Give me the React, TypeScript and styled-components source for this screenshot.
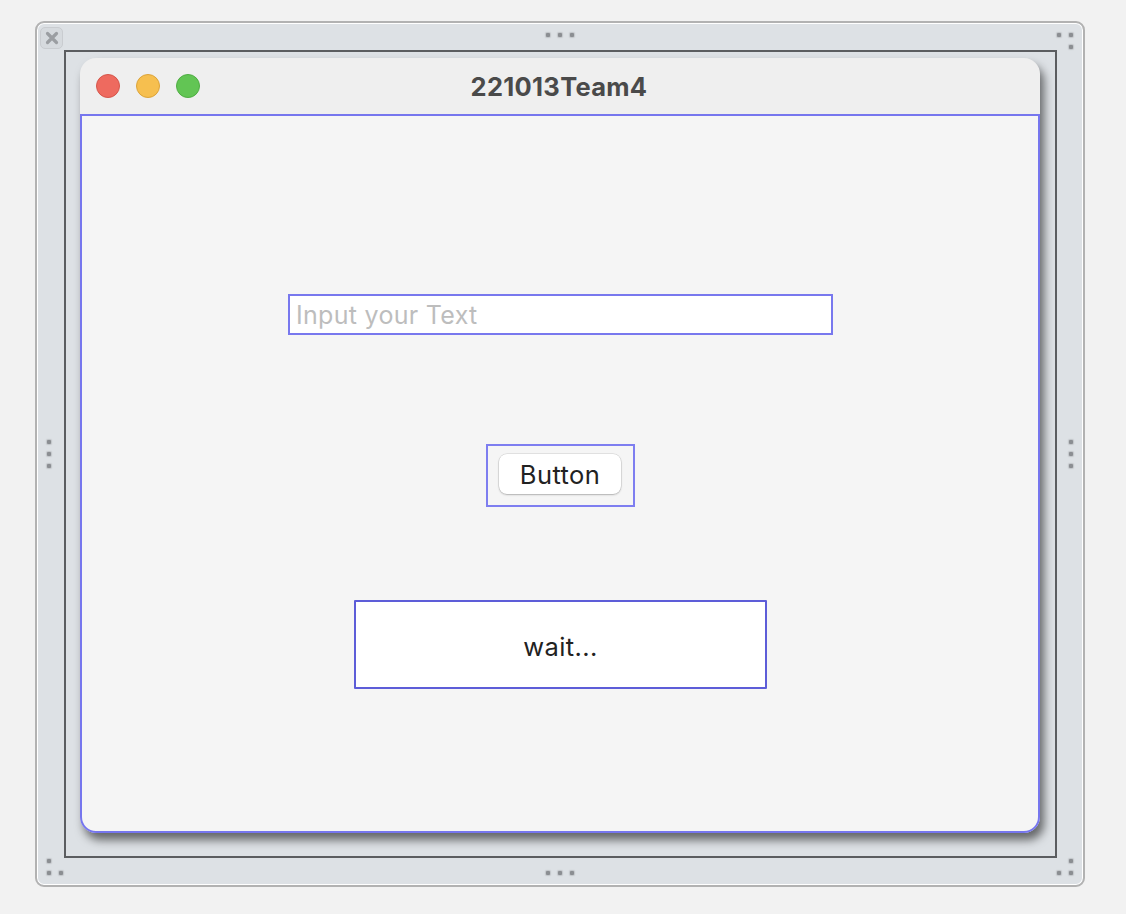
import React from 'react';
import styled, { createGlobalStyle } from 'styled-components';

const GlobalStyle = createGlobalStyle`
    html, body {
        margin: 0;
        padding: 0;
        background: #f2f2f2;
        font-family: Inter, "Liberation Sans", sans-serif;
    }
`;

const Page = styled.div`
    width: 1126px;
    height: 914px;
    padding: 21px 0 0 35px;
    box-sizing: border-box;
`;

const Frame = styled.div`
    position: relative;
    width: 1050px;
    height: 866px;
    box-sizing: border-box;
    border: 2px solid #b2b2b2;
    border-radius: 9px;
    background: #dde1e5;
    box-shadow: inset 0 0 0 1px #ffffff;
    padding: 27px;
`;

const CloseBox = styled.div`
    position: absolute;
    left: 3px;
    top: 4px;
    width: 23px;
    height: 22px;
    box-sizing: border-box;
    border: 1px solid #c9ccd0;
    border-radius: 5px;
    background: #d6dade;
    display: flex;
    align-items: center;
    justify-content: center;
`;

const Dot = styled.span<{ $x: number; $y: number }>`
    position: absolute;
    left: ${p => p.$x - 2}px;
    top: ${p => p.$y - 2}px;
    width: 4px;
    height: 4px;
    border-radius: 1px;
    background: #8b8e92;
    box-shadow: 0 0 1px 1px rgba(139, 142, 146, 0.35);
`;

const Scene = styled.div`
    width: 993px;
    height: 808px;
    box-sizing: border-box;
    border: 2px solid #5b5d60;
    padding: 6px 15px 23px 14px;
`;

const Window = styled.div`
    width: 960px;
    height: 775px;
    border-radius: 16px;
    background: #efefef;
    box-shadow: 4px 7px 10px rgba(0, 0, 0, 0.55);
    display: flex;
    flex-direction: column;
`;

const TitleBar = styled.div`
    position: relative;
    height: 56px;
    flex: none;
    display: flex;
    align-items: center;
    justify-content: center;
`;

const Lights = styled.div`
    position: absolute;
    left: 16px;
    top: 16px;
    display: flex;
    gap: 16px;
`;

const Light = styled.span<{ $fill: string; $edge: string }>`
    width: 24px;
    height: 24px;
    box-sizing: border-box;
    border-radius: 50%;
    background: ${p => p.$fill};
    border: 1px solid ${p => p.$edge};
`;

const Title = styled.div`
    font-size: 25.5px;
    font-weight: 700;
    letter-spacing: 0.3px;
    color: #4a4a4a;
    margin-left: -2px;
    margin-top: 0px;
`;

const Content = styled.div`
    flex: 1;
    box-sizing: border-box;
    border: 2px solid #7676ee;
    border-radius: 0 0 16px 16px;
    background: #f5f5f5;
    display: flex;
    flex-direction: column;
    align-items: center;
    padding-top: 178px;
`;

const TextInput = styled.input`
    width: 545px;
    height: 41px;
    box-sizing: border-box;
    border: 2px solid #7878ee;
    background: #ffffff;
    margin-left: 1px;
    padding: 0 6px;
    font-family: Inter, "Liberation Sans", sans-serif;
    font-size: 25px;
    letter-spacing: 0.3px;
    color: #222;
    outline: none;
    &::placeholder {
        color: #bdbdbd;
    }
`;

const ButtonOutline = styled.div`
    width: 149px;
    height: 63px;
    box-sizing: border-box;
    border: 2px solid #7e7ef0;
    margin-top: 109px;
    margin-left: 1px;
    display: flex;
    align-items: center;
    justify-content: center;
`;

const PushButton = styled.button`
    width: 122px;
    height: 40px;
    margin-left: -1px;
    margin-top: -3px;
    border: none;
    border-radius: 8px;
    background: #ffffff;
    box-shadow: 0 0 0 0.5px rgba(0, 0, 0, 0.14), 0 1px 2px rgba(0, 0, 0, 0.22);
    font-family: Inter, "Liberation Sans", sans-serif;
    font-size: 25.5px;
    letter-spacing: 0.4px;
    color: #222222;
    padding: 0;
`;

const Label = styled.div`
    width: 413px;
    height: 89px;
    box-sizing: border-box;
    border: 2px solid #5d5dd8;
    margin-top: 93px;
    margin-left: 1px;
    background: #ffffff;
    border-radius: 1px;
    display: flex;
    align-items: center;
    justify-content: center;
    padding-top: 3px;
    font-size: 25.5px;
    letter-spacing: 0.4px;
    color: #222222;
`;

const dots: [number, number][] = [
    [511, 12], [523, 12], [535, 12],
    [1022, 12], [1034, 12], [1034, 24],
    [12, 419], [12, 431], [12, 443],
    [1034, 419], [1034, 431], [1034, 443],
    [12, 838], [12, 850], [24, 850],
    [511, 850], [523, 850], [535, 850],
    [1022, 850], [1034, 850], [1034, 838],
];

export default function App() {
    return (
        <>
            <GlobalStyle />
            <Page>
                <Frame>
                    <CloseBox>
                        <svg width="16" height="16" viewBox="0 0 16 16">
                            <path d="M3.5 3.5 L12.5 12.5 M12.5 3.5 L3.5 12.5" stroke="#9b9ea2" strokeWidth="3.2" strokeLinecap="round" />
                        </svg>
                    </CloseBox>
                    {dots.map(([x, y], i) => <Dot key={i} $x={x} $y={y} />)}
                    <Scene>
                        <Window>
                            <TitleBar>
                                <Lights>
                                    <Light $fill="#ee6a5f" $edge="#d5564b" />
                                    <Light $fill="#f6bf4f" $edge="#dca43a" />
                                    <Light $fill="#62c554" $edge="#4fad43" />
                                </Lights>
                                <Title>221013Team4</Title>
                            </TitleBar>
                            <Content>
                                <TextInput placeholder="Input your Text" />
                                <ButtonOutline>
                                    <PushButton>Button</PushButton>
                                </ButtonOutline>
                                <Label>wait...</Label>
                            </Content>
                        </Window>
                    </Scene>
                </Frame>
            </Page>
        </>
    );
}
